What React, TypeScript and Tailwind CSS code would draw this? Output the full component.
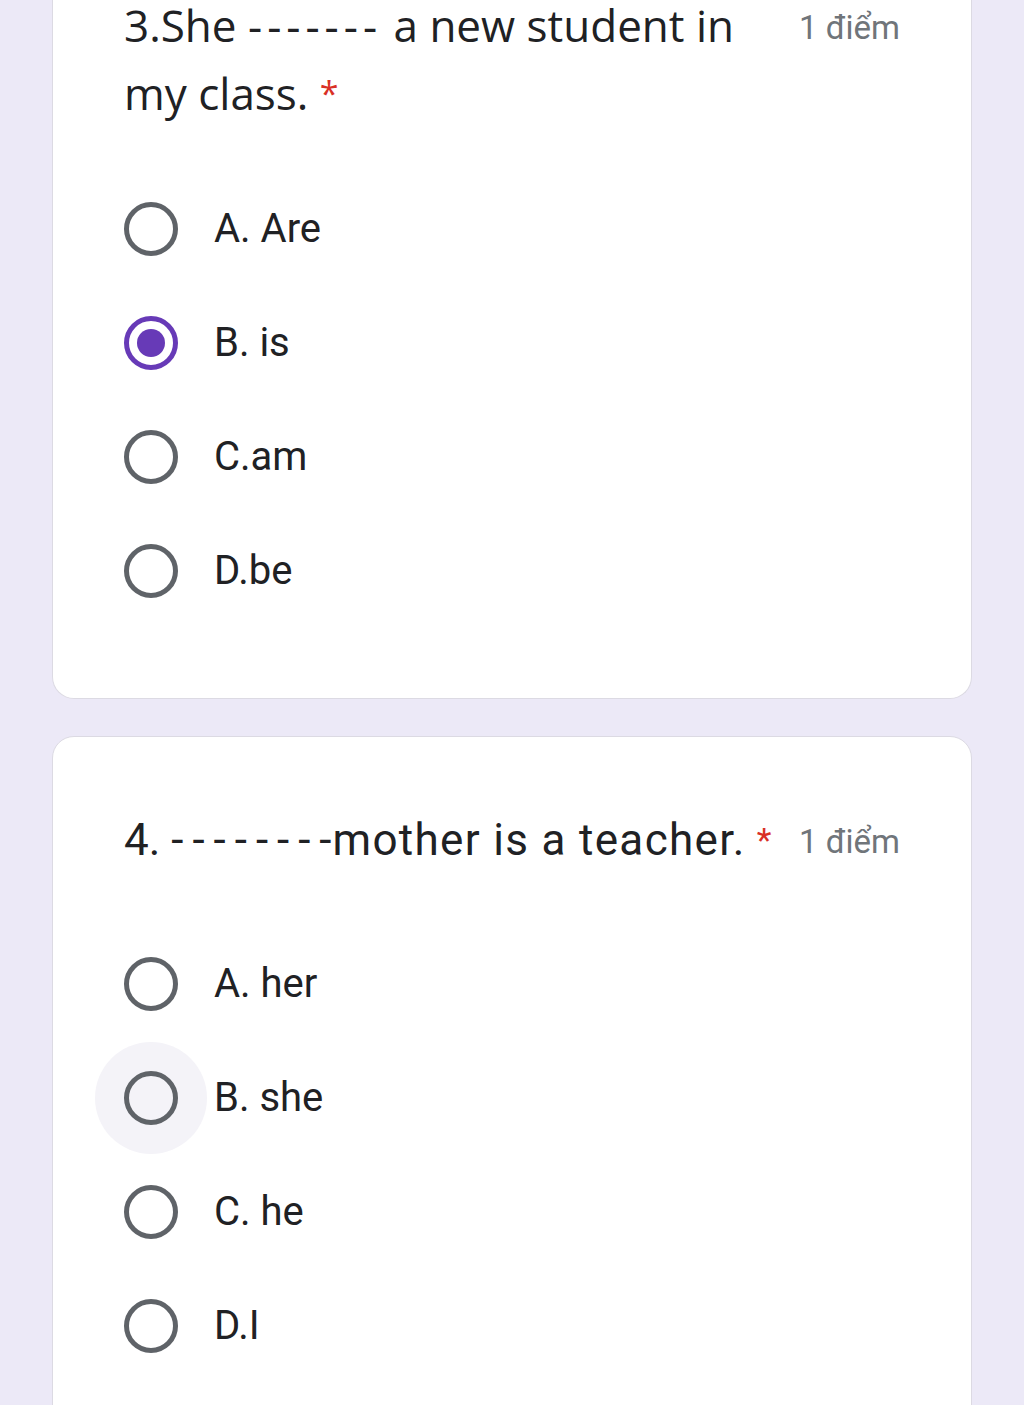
function Radio({ checked = false, hover = false }: { checked?: boolean; hover?: boolean }) {
  return (
    <div className="relative w-[54px] h-[54px] shrink-0">
      {hover && (
        <div className="absolute left-[-29px] top-[-29px] w-[112px] h-[112px] rounded-full bg-[#f4f3f8]" />
      )}
      <div
        className={
          checked
            ? "relative w-[54px] h-[54px] rounded-full border-[5px] border-[#673ab7] flex items-center justify-center"
            : "relative w-[54px] h-[54px] rounded-full border-[5px] border-[#5f6368]"
        }
      >
        {checked && <div className="w-[28px] h-[28px] rounded-full bg-[#673ab7]" />}
      </div>
    </div>
  );
}

function Option({ label, checked, hover }: { label: string; checked?: boolean; hover?: boolean }) {
  return (
    <div className="h-[114px] flex items-center">
      <Radio checked={checked} hover={hover} />
      <span className="relative ml-[36px] text-[40px] text-[#202124] font-['Roboto',sans-serif]">{label}</span>
    </div>
  );
}

export default function App() {
  return (
    <div className="h-[1405px] overflow-hidden bg-[#ece9f7] px-[52px]">
      {/* QUESTION 3 */}
      <div className="bg-white rounded-b-[22px] border border-t-0 border-[#dcdae3] pl-[71px] pr-[71px] pb-[70px]">
        <div className="flex items-start">
          <div className="flex-1 text-[44px] text-[#202124] font-['Open_Sans',sans-serif] whitespace-nowrap">
            <div className="leading-[50px]">
              3.She <span className="tracking-[5px]">-------</span> a new student in
            </div>
            <div className="mt-[9px] leading-[68px]">
              my class. <span className="text-[#d93025] text-[34px] align-top">*</span>
            </div>
          </div>
          <div className="shrink-0 text-[33px] leading-[50px] pt-[3px] text-[#70757a] font-['Roboto',sans-serif]">
            1 điểm
          </div>
        </div>
        <div className="mt-[45px]">
          <Option label="A. Are" />
          <Option label="B. is" checked />
          <Option label="C.am" />
          <Option label="D.be" />
        </div>
      </div>

      {/* QUESTION 4 */}
      <div className="mt-[37px] bg-white rounded-[22px] border border-[#dcdae3] pl-[71px] pr-[71px] pt-[69px] pb-[100px]">
        <div className="flex items-start">
          <div className="flex-1 text-[44px] leading-[68px] text-[#202124] font-['Roboto',sans-serif] whitespace-nowrap">
            4. <span className="tracking-[9px]">--------</span>
            <span className="-ml-[8px] tracking-[0.03em]">mother is a teacher.</span>{" "}
            <span className="text-[#d93025] text-[34px] align-top">*</span>
          </div>
          <div className="shrink-0 text-[33px] leading-[68px] pt-[2px] text-[#70757a] font-['Roboto',sans-serif]">
            1 điểm
          </div>
        </div>
        <div className="mt-[51px]">
          <Option label="A. her" />
          <Option label="B. she" hover />
          <Option label="C. he" />
          <Option label="D.I" />
        </div>
      </div>
    </div>
  );
}
